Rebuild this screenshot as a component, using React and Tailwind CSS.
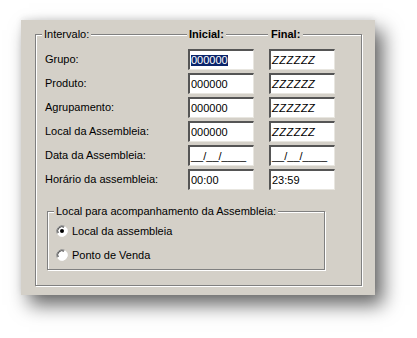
import React from "react";

const rows = [
  ["Grupo:", "000000", "ZZZZZZ", true],
  ["Produto:", "000000", "ZZZZZZ"],
  ["Agrupamento:", "000000", "ZZZZZZ"],
  ["Local da Assembleia:", "000000", "ZZZZZZ"],
  ["Data da Assembleia:", "__/__/____", "__/__/____"],
  ["Horário da assembleia:", "00:00", "23:59"],
];

function Field({ value, selected, italic }) {
  return (
    <div className="w-[66px] h-[21px] bg-white border-t-2 border-l-2 border-t-[#555] border-l-[#555] border-r border-b border-r-[#e8e6e0] border-b-[#e8e6e0] flex items-center pl-[1px] leading-none">
      <span className={(selected ? "bg-[#0a246a] text-white " : "text-black ") + (italic ? "italic tracking-[0.5px]" : "")}>{value}</span>
    </div>
  );
}

function Radio({ checked }) {
  return (
    <svg width="12" height="12" viewBox="0 0 12 12">
      <circle cx="6" cy="6" r="5.5" fill="#fff" />
      <path d="M1.2 8.5 A5.5 5.5 0 0 1 8.5 1.2" stroke="#808080" strokeWidth="1" fill="none" />
      <path d="M2.2 8 A4.3 4.3 0 0 1 8 2.2" stroke="#404040" strokeWidth="1" fill="none" />
      <path d="M10.8 3.5 A5.5 5.5 0 0 1 3.5 10.8" stroke="#fff" strokeWidth="1" fill="none" />
      {checked && <circle cx="6" cy="6" r="2" fill="#000" />}
    </svg>
  );
}

export default function App() {
  return (
    <div className="w-[417px] h-[338px] bg-white pt-[20px] pl-[21px]" style={{ fontFamily: '"Liberation Sans", Arial, sans-serif' }}>
      <div className="w-[354px] h-[275px] bg-[#d4d0c8] pt-[14px] pl-[14px] text-[11px] text-black shadow-[0_-2px_6px_rgba(0,0,0,0.08),8px_10px_18px_rgba(0,0,0,0.6)]">
        <div className="relative w-[327px] h-[252px] border border-[#808080] shadow-[inset_1px_1px_0_#fff,1px_1px_0_#fff] pt-[14px] pl-[9px]">
          <span className="absolute left-[6px] top-[-8px] bg-[#d4d0c8] px-[2px] leading-[14px]">Intervalo:</span>
          <span className="absolute left-[151px] top-[-8px] bg-[#d4d0c8] px-[2px] leading-[14px] font-bold">Inicial:</span>
          <span className="absolute left-[232px] top-[-8px] bg-[#d4d0c8] px-[3px] leading-[14px] font-bold">Final:</span>
          <div className="flex flex-col gap-[3px]">
            {rows.map(([label, a, b, sel]) => (
              <div key={label} className="flex items-center h-[21px]">
                <span className="w-[143px]">{label}</span>
                <Field value={a} selected={sel} />
                <div className="w-[15px]" />
                <Field value={b} italic={b === "ZZZZZZ"} />
              </div>
            ))}
          </div>
          <div className="relative ml-[2px] mt-[21px] w-[278px] h-[59px] border border-[#808080] shadow-[inset_1px_1px_0_#fff,1px_1px_0_#fff] pt-[13px] pl-[8px] flex flex-col gap-[12px]">
            <span className="absolute left-[6px] top-[-8px] bg-[#d4d0c8] px-[2px] leading-[14px]">Local para acompanhamento da Assembleia:</span>
            <div className="flex items-center gap-[4px] h-[12px]">
              <Radio checked />
              <span>Local da assembleia</span>
            </div>
            <div className="flex items-center gap-[4px] h-[12px]">
              <Radio />
              <span>Ponto de Venda</span>
            </div>
          </div>
        </div>
      </div>
    </div>
  );
}
